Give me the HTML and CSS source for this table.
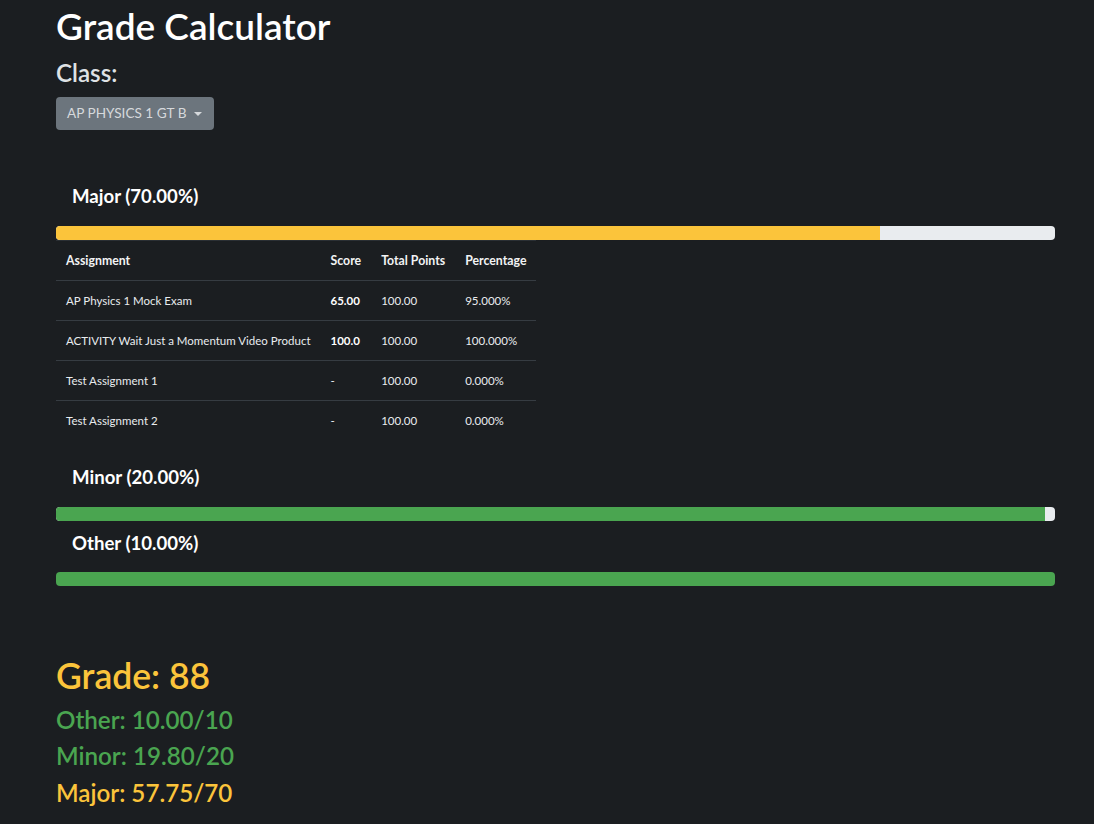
FILE: index.html
```html
<!DOCTYPE html>
<html lang="en">
<head>
<meta charset="utf-8">
<title>Grade Calculator</title>
<link rel="stylesheet" href="styles.css">
</head>
<body>
<main class="page">
  <h1 class="title">Grade Calculator</h1>
  <h4 class="label">Class:</h4>
  <button class="class-btn" type="button">AP PHYSICS 1 GT B<span class="caret"></span></button>

  <section class="categories">
    <div class="category">
      <h5 class="cat-head">Major (70.00%)</h5>
      <div class="progress"><div class="progress-bar bar-warning" style="width: 82.5%"></div></div>
      <table class="grades">
        <thead>
          <tr><th>Assignment</th><th>Score</th><th>Total Points</th><th>Percentage</th></tr>
        </thead>
        <tbody>
          <tr><td>AP Physics 1 Mock Exam</td><td class="score">65.00</td><td>100.00</td><td>95.000%</td></tr>
          <tr><td>ACTIVITY Wait Just a Momentum Video Product</td><td class="score">100.0</td><td>100.00</td><td>100.000%</td></tr>
          <tr><td>Test Assignment 1</td><td>-</td><td>100.00</td><td>0.000%</td></tr>
          <tr><td>Test Assignment 2</td><td>-</td><td>100.00</td><td>0.000%</td></tr>
        </tbody>
      </table>
    </div>
    <div class="category">
      <h5 class="cat-head">Minor (20.00%)</h5>
      <div class="progress"><div class="progress-bar bar-success" style="width: 99%"></div></div>
    </div>
    <div class="category">
      <h5 class="cat-head">Other (10.00%)</h5>
      <div class="progress"><div class="progress-bar bar-success" style="width: 100%"></div></div>
    </div>
  </section>

  <section class="summary">
    <h2 class="grade text-warning">Grade: 88</h2>
    <h4 class="sub text-success">Other: 10.00/10</h4>
    <h4 class="sub text-success">Minor: 19.80/20</h4>
    <h4 class="sub text-warning">Major: 57.75/70</h4>
  </section>
</main>
</body>
</html>
```

FILE: styles.css
```css
* { box-sizing: border-box; }

html, body {
  margin: 0;
  padding: 0;
  background: #1b1e21;
  color: #e9ecef;
  font-family: Lato, "Open Sans", sans-serif;
}

.page {
  padding: 3px 39px 0 56px;
}

.title {
  margin: 0 0 10px;
  font-size: 37px;
  line-height: 46px;
  font-weight: 600;
  color: #ffffff;
}

.label {
  margin: 0 0 9px;
  font-size: 24.2px;
  line-height: 28.4px;
  font-weight: 600;
  color: #dfe2e5;
}

.class-btn {
  display: inline-flex;
  align-items: center;
  height: 33px;
  margin-top: 1px;
  padding: 6px 12px 6px 11px;
  border: 0;
  border-radius: 4px;
  background: #6c757d;
  color: #d6d9dc;
  font-family: inherit;
  font-size: 13.6px;
  line-height: 21px;
}

.caret {
  display: inline-block;
  margin-left: 8px;
  width: 0;
  height: 0;
  border-top: 4px solid #d6d9dc;
  border-left: 4px solid transparent;
  border-right: 4px solid transparent;
}

.categories {
  margin-top: 44px;
}

.cat-head {
  margin: 0;
  padding: 12px 16px 18px;
  font-size: 18.6px;
  line-height: 21.6px;
  font-weight: 700;
  color: #ffffff;
}

.progress {
  display: flex;
  height: 14px;
  border-radius: 4px;
  overflow: hidden;
  background: #e9ecef;
}

.progress-bar { height: 100%; }
.bar-warning { background: #fbc43b; }
.bar-success { background: #4aa550; }

.grades {
  border-collapse: collapse;
  margin-bottom: 15px;
  font-size: 11.5px;
  line-height: 18px;
  color: #e9ecef;
}

.grades th,
.grades td {
  padding: 11px 10px 10px;
  text-align: left;
  white-space: nowrap;
  border-top: 1px solid #363c42;
}

.grades thead th {
  border-top: 1px solid #2a2f34;
  font-size: 12.3px;
  font-weight: 700;
  color: #f2f3f4;
}

.grades td.score { font-weight: 700; color: #ffffff; }

.summary {
  margin-top: 69px;
}

.grade {
  margin: 0 0 8px;
  font-size: 35.5px;
  line-height: 42.6px;
  font-weight: 600;
}

.sub {
  margin: 0 0 8px;
  font-size: 24.2px;
  line-height: 28.4px;
  font-weight: 600;
}

.text-warning { color: #fbc43b; }
.text-success { color: #4aa550; }
```
